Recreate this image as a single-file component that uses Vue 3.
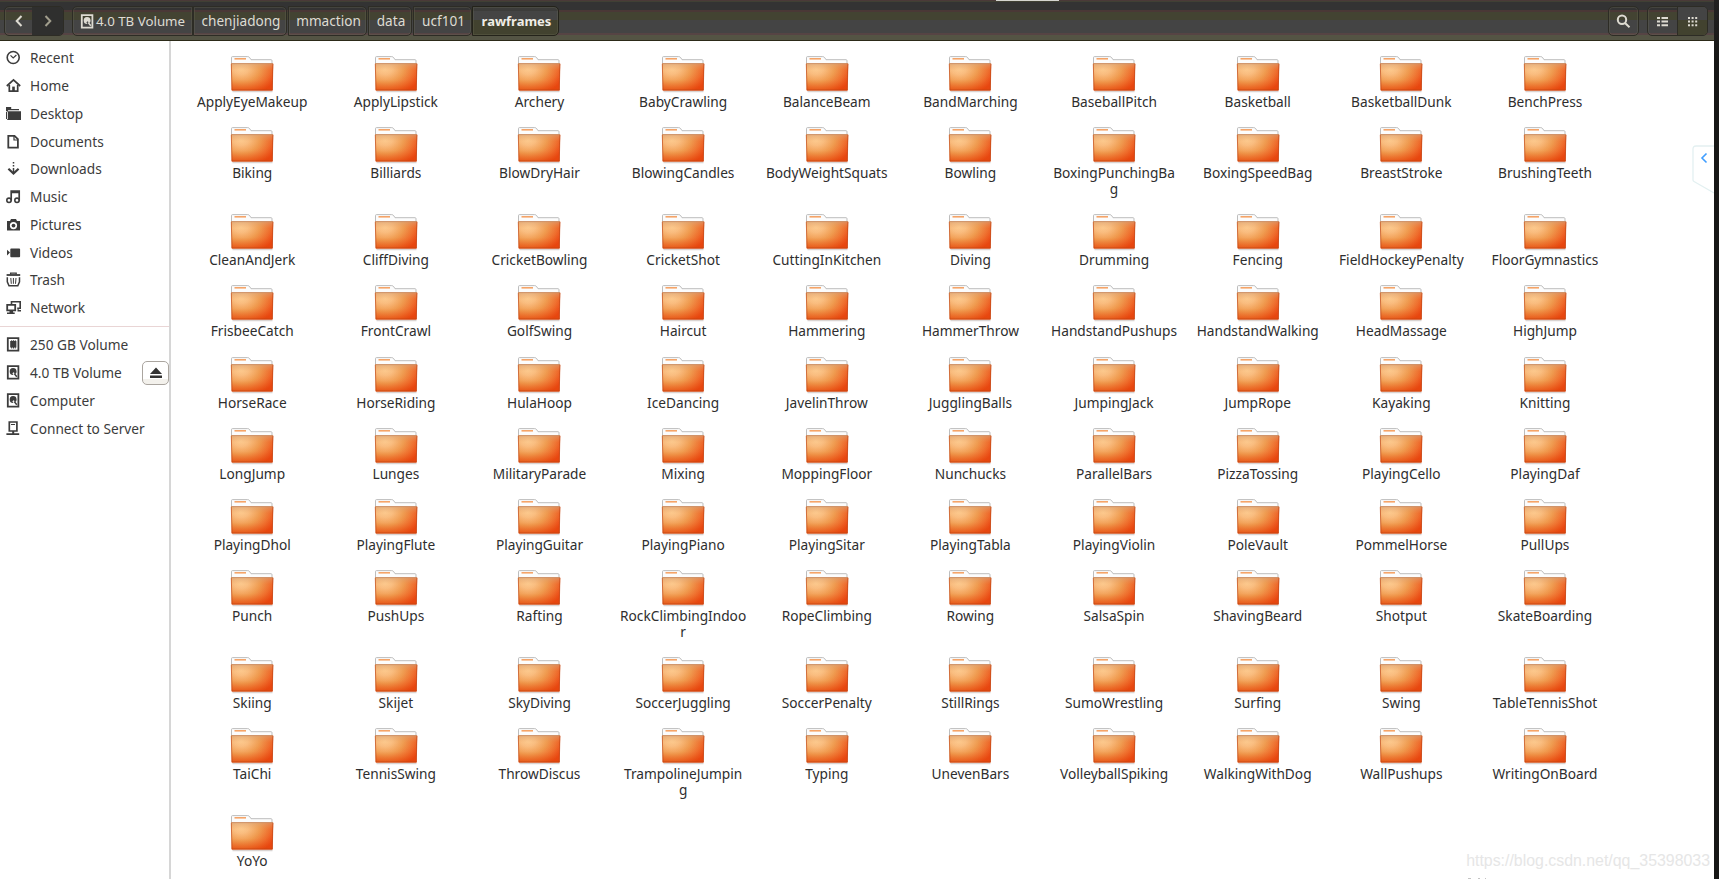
<template>
  <div class="window">
    <!-- Shared folder artwork, referenced by every grid item -->
    <svg class="defs" width="0" height="0">
      <defs>
        <radialGradient id="folderGlow" gradientUnits="userSpaceOnUse" cx="0" cy="0" r="1" gradientTransform="translate(11 13) scale(37 27)">
          <stop offset="0" stop-color="#ffcf94" />
          <stop offset="0.2" stop-color="#fbc184" />
          <stop offset="0.5" stop-color="#f09c50" />
          <stop offset="0.78" stop-color="#ef6c2c" />
          <stop offset="1" stop-color="#ea400f" />
        </radialGradient>
        <linearGradient id="folderShade" x1="0" y1="0" x2="0" y2="1">
          <stop offset="0" stop-color="#d8a880" stop-opacity="0.6" />
          <stop offset="0.25" stop-color="#e8a060" stop-opacity="0.1" />
          <stop offset="0.6" stop-color="#e86a20" stop-opacity="0.05" />
          <stop offset="1" stop-color="#e04808" stop-opacity="0.5" />
        </linearGradient>
        <symbol id="folder" viewBox="0 0 44 37">
          <path d="M2.5 35.5h40" stroke="#d9d4d2" stroke-width="1.4" />
          <path d="M1.5 9V1.6Q1.5.6 2.5.6H17.5Q19 .6 19.8 1.8L21 3.7H41Q42 3.7 42 4.7V9Z" fill="#fcfcfc" stroke="#b5b5b5" stroke-width="0.9" />
          <path d="M4.5 2.8h11.5" stroke="#f5a468" stroke-width="1.6" />
          <path d="M1 7.5h42.2L42.6 34.4H1.7Z" fill="url(#folderGlow)" />
          <path d="M1 7.5h42.2L42.6 34.4H1.7Z" fill="url(#folderShade)" />
          <path d="M1.3 7.9 2 34h40.3l.6-26" fill="none" stroke="#bd4414" stroke-width="0.9" stroke-opacity="0.75" />
          <path d="M1 7.6h42" stroke="#c98a60" stroke-width="0.9" />
        </symbol>
      </defs>
    </svg>

    <header class="toolbar">
      <div class="group nav">
        <button class="btn back"><svg width="8" height="12" viewBox="0 0 8 12"><path d="M6.5 1 1.7 6l4.8 5" /></svg></button>
        <button class="btn forward"><svg width="8" height="12" viewBox="0 0 8 12"><path d="m1.5 1 4.8 5-4.8 5" /></svg></button>
      </div>
      <div class="path">
        <button v-for="(p, i) in crumbs" :key="p" class="crumb" :class="['crumb-' + i, { active: i === crumbs.length - 1 }]">
          <svg v-if="i === 0" class="disk" width="14" height="15" viewBox="0 0 14 15" v-html="glyphs.disk"></svg>
          <span>{{ p }}</span>
        </button>
      </div>
      <div class="spacer"></div>
      <button class="group search">
        <svg width="15" height="15" viewBox="0 0 15 15"><circle cx="6" cy="5.8" r="4.2" /><path d="m9 9 4.5 4.2" /></svg>
      </button>
      <div class="group views">
        <button class="btn">
          <svg class="solid" width="11" height="11" viewBox="0 0 11 11">
            <path d="M0 1h3v2H0zM4.5 1H11v2H4.5zM0 4.6h3v2H0zM4.5 4.6H11v2H4.5zM0 8.2h3v2H0zM4.5 8.2H11v2H4.5z" />
          </svg>
        </button>
        <button class="btn grid-view">
          <svg class="solid" width="11" height="11" viewBox="0 0 11 11">
            <path d="M1 1h2v2H1zM4.6 1h2v2h-2zM8.2 1h2v2h-2zM1 4.6h2v2H1zM4.6 4.6h2v2h-2zM8.2 4.6h2v2h-2zM1 8.2h2v2H1zM4.6 8.2h2v2h-2zM8.2 8.2h2v2h-2z" />
          </svg>
        </button>
      </div>
    </header>

    <div class="body">
      <aside class="sidebar">
        <ul class="places">
          <li v-for="p in places" :key="p.name">
            <svg width="15" height="15" viewBox="0 0 15 15" v-html="glyphs[p.icon]"></svg>
            <span>{{ p.name }}</span>
          </li>
        </ul>
        <ul class="places devices">
          <li v-for="d in devices" :key="d.name">
            <svg width="15" height="15" viewBox="0 0 15 15" v-html="glyphs[d.icon]"></svg>
            <span>{{ d.name }}</span>
            <button v-if="d.eject" class="eject">
              <svg width="12" height="12" viewBox="0 0 12 12"><path d="M6 .5 12 7H0zM0 8.5h12V11H0z" /></svg>
            </button>
          </li>
        </ul>
      </aside>

      <main class="files">
        <div v-for="f in folders" :key="f" class="item">
          <svg class="folder" width="44" height="37"><use href="#folder" /></svg>
          <span class="label">{{ f }}</span>
        </div>
      </main>
    </div>

    <div class="top-mark"></div>
    <svg class="side-tab" width="22" height="50" viewBox="0 0 22 50">
      <path d="M22 1H4Q1 1 1 4v31q0 1 1 1.5L22 48" fill="none" stroke="#e3f0f1" stroke-width="1.3" />
      <path d="M14.5 8.5 10 13l4.5 4.5" fill="none" stroke="#409eff" stroke-width="1.6" />
    </svg>
    <div class="watermark">https://blog.csdn.net/qq_35398033</div>
    <svg class="cut-marks" width="24" height="2" viewBox="0 0 24 2"><path d="M1 1.5h3M11 1.5h2M18 1.5h1" stroke="#c4c4c4" /></svg>
    <div class="edge"></div>
  </div>
</template>

<script setup>
const crumbs = ['4.0 TB Volume', 'chenjiadong', 'mmaction', 'data', 'ucf101', 'rawframes'];

const places = [
  { name: 'Recent', icon: 'recent' },
  { name: 'Home', icon: 'home' },
  { name: 'Desktop', icon: 'desktop' },
  { name: 'Documents', icon: 'documents' },
  { name: 'Downloads', icon: 'downloads' },
  { name: 'Music', icon: 'music' },
  { name: 'Pictures', icon: 'pictures' },
  { name: 'Videos', icon: 'videos' },
  { name: 'Trash', icon: 'trash' },
  { name: 'Network', icon: 'network' },
];

const devices = [
  { name: '250 GB Volume', icon: 'ssd' },
  { name: '4.0 TB Volume', icon: 'disk', eject: true },
  { name: 'Computer', icon: 'disk' },
  { name: 'Connect to Server', icon: 'server' },
];

// Symbolic icons on a 15x15 canvas, drawn in the current text colour
const line = (d, w = 1.6) => `<path d="${d}" fill="none" stroke="currentColor" stroke-width="${w}"/>`;
const fill = (d) => `<path d="${d}" fill="currentColor" fill-rule="evenodd"/>`;

const glyphs = {
  recent: '<circle cx="7.2" cy="7.5" r="6" fill="none" stroke="currentColor" stroke-width="1.6"/>' + line('M4.5 5.3 7.2 8l3.2-3', 1.2),
  home: line('M.8 8 7.5 1.9 14.2 8', 1.7) + line('M3.3 7v6.2h8.4V7', 1.7) + fill('M6.2 8.6h2.6V13H6.2z'),
  desktop: fill('M0 1h5.2v2H13v1.2H2v1.5H0zM0 5h1.2v9H0zM2 5.2h13V14H0V13h2z'),
  documents: line('M2.3 1.8h6.2l3.4 3.4v8.4H2.3z', 1.8) + line('M8 2v4h4', 1.2),
  downloads: line('M7.5 1v1.4M7.5 4v1.4M7.5 7v5.3', 1.5) + line('m2.4 7.8 5.1 4.8 5.1-4.8', 2.2),
  music: line('M5.2 11.5V2h8v9.5M5.2 3.3h8', 1.7) +
    '<circle cx="3" cy="11.3" r="2.2" fill="none" stroke="currentColor" stroke-width="1.6"/><circle cx="11" cy="11.3" r="2.2" fill="none" stroke="currentColor" stroke-width="1.6"/>',
  pictures: fill('M1 4h3l1-2h5l1 2h3v9.5H1zM7.5 5a3.6 3.6 0 1 0 0 7.2 3.6 3.6 0 0 0 0-7.2z') +
    '<circle cx="7.5" cy="8.6" r="1.9" fill="currentColor"/>',
  videos: fill('M1 4.8 4 7.6l-3 2.8zM4.3 4.2Q4.3 3.4 5.2 3.4h8q.9 0 .9.9v7q0 .9-.9.9h-8q-.9 0-.9-.9z'),
  trash: line('M4.6 2.4V1.2h5.6v1.2', 1.3) + line('M.6 3h13.6', 1.8) + line('M1.3 5.2v4.6l1.7 4h8.8l1.7-4V5.2', 1.5) + line('m4.8 6 .5 5.8M7.4 6v5.8M10 6l-.5 5.8', 1),
  network: line('M5.5 4V1.7h8.7v6.5h-3', 1.6) + line('M1.2 4.8h8v5.6h-8z', 1.8) + fill('M3.5 11h3.6v1.5h1.6V14H1v-1.5h2.5zM11.5 9h1.2v1H15v1.5h-3.5z'),
  ssd: line('M1.8 1.2h10.6v12.4H1.8z', 1.8) + fill('M4.2 4h1v-.8h1V4h.8v-.8h1V4h.8v-.8h.9V4h.7v6.5h-.7v.9h-.9v-.9H8v.9H7v-.9h-.8v.9h-1v-.9h-1z'),
  disk: line('M1.8 1.2h10.6v12.4H1.8z', 1.8) + fill('M7 3a3.6 3.6 0 0 1 3.6 3.4q0 1.6-1 2.6L7.6 7.2 6.4 8.3l1 1.7A3.5 3.5 0 1 1 7 3z') + line('m8.2 8.5 2.6 3.2', 1.5),
  server: line('M3.3 1h7.6v9H3.3z', 1.7) + fill('M5 3h4v1H5zM6.2 10h2v2.3h5v1.8H.4v-1.8h5.8z'),
};

// A newline marks where a long name breaks onto its second line
const folders = [
  'ApplyEyeMakeup', 'ApplyLipstick', 'Archery', 'BabyCrawling', 'BalanceBeam', 'BandMarching', 'BaseballPitch', 'Basketball', 'BasketballDunk', 'BenchPress',
  'Biking', 'Billiards', 'BlowDryHair', 'BlowingCandles', 'BodyWeightSquats', 'Bowling', 'BoxingPunchingBa\ng', 'BoxingSpeedBag', 'BreastStroke', 'BrushingTeeth',
  'CleanAndJerk', 'CliffDiving', 'CricketBowling', 'CricketShot', 'CuttingInKitchen', 'Diving', 'Drumming', 'Fencing', 'FieldHockeyPenalty', 'FloorGymnastics',
  'FrisbeeCatch', 'FrontCrawl', 'GolfSwing', 'Haircut', 'Hammering', 'HammerThrow', 'HandstandPushups', 'HandstandWalking', 'HeadMassage', 'HighJump',
  'HorseRace', 'HorseRiding', 'HulaHoop', 'IceDancing', 'JavelinThrow', 'JugglingBalls', 'JumpingJack', 'JumpRope', 'Kayaking', 'Knitting',
  'LongJump', 'Lunges', 'MilitaryParade', 'Mixing', 'MoppingFloor', 'Nunchucks', 'ParallelBars', 'PizzaTossing', 'PlayingCello', 'PlayingDaf',
  'PlayingDhol', 'PlayingFlute', 'PlayingGuitar', 'PlayingPiano', 'PlayingSitar', 'PlayingTabla', 'PlayingViolin', 'PoleVault', 'PommelHorse', 'PullUps',
  'Punch', 'PushUps', 'Rafting', 'RockClimbingIndoo\nr', 'RopeClimbing', 'Rowing', 'SalsaSpin', 'ShavingBeard', 'Shotput', 'SkateBoarding',
  'Skiing', 'Skijet', 'SkyDiving', 'SoccerJuggling', 'SoccerPenalty', 'StillRings', 'SumoWrestling', 'Surfing', 'Swing', 'TableTennisShot',
  'TaiChi', 'TennisSwing', 'ThrowDiscus', 'TrampolineJumpin\ng', 'Typing', 'UnevenBars', 'VolleyballSpiking', 'WalkingWithDog', 'WallPushups', 'WritingOnBoard',
  'YoYo',
];
</script>

<style>
body {
  margin: 0;
  overflow: hidden;
}
</style>

<style scoped>
.window {
  position: relative;
  display: flex;
  flex-direction: column;
  width: 1719px;
  height: 879px;
  overflow: hidden;
  background: #fff;
  color: #333;
  font-family: "Noto Sans", "Open Sans", sans-serif;
  font-size: 13.7px;
}
.defs {
  position: absolute;
}
button {
  margin: 0;
  padding: 0;
  border: 0;
  background: none;
  color: inherit;
  font: inherit;
}

/* --- Toolbar --- */
.toolbar {
  display: flex;
  flex: none;
  box-sizing: border-box;
  height: 41px;
  padding: 6px 11px 5px 4px;
  color: #dedbd2;
  background: linear-gradient(
    #4a3a38 0 1px, #404034 1px 2px, #333 2px 10px, #4a3836 10px 12px,
    #434332 12px 19.5px, #444 19.5px 33px, #564444 33px 35px,
    #545444 35px 40px, #2c2a18 40px
  );
}
.toolbar svg {
  fill: none;
  stroke: currentColor;
  stroke-width: 2;
}
.toolbar svg.solid {
  fill: currentColor;
  stroke: none;
}
.toolbar svg.disk {
  stroke: none;
}
.group,
.crumb {
  box-sizing: border-box;
  display: flex;
  align-items: center;
  justify-content: center;
  height: 30px;
  border: 1px solid #2d2c25;
  border-radius: 5px;
  box-shadow: inset 0 0 0 1px rgba(110, 108, 88, 0.3);
}
.btn {
  flex: 1;
  display: flex;
  align-items: center;
  justify-content: center;
  height: 100%;
}
.nav {
  width: 60px;
  margin-right: 8px;
}
.back {
  flex: 0 0 27px;
}
.forward {
  background: #2f2f2e;
  color: #a19e8d;
  border-radius: 0 4px 4px 0;
}
.path {
  display: flex;
}
.crumb {
  padding-left: 2px;
  border-radius: 0 5px 5px 0;
  font-size: 13.6px;
}
.crumb span {
  position: relative;
  top: -0.5px;
}
.crumb-0 {
  width: 121px;
  padding-left: 0;
  border-radius: 5px 0 0 5px;
  gap: 2px;
  font-size: 13.3px;
}
.crumb-1 {
  width: 94px;
  margin-right: 1px;
}
.crumb-2 {
  width: 79px;
  margin-right: 1px;
}
.crumb-3 {
  width: 44px;
  margin-right: 1px;
}
.crumb-4 {
  width: 59px;
}
.crumb-5 {
  width: 87px;
}
.active {
  font-size: 13px;
  font-weight: 700;
  color: #efede6;
  border-color: #24231a;
  background: linear-gradient(#3c3c3a 0 4px, #444 4px 13px, #42422f 13px);
}
.spacer {
  flex: 1;
}
.search {
  width: 31px;
  margin-right: 8px;
}
.views {
  width: 61px;
}
.grid-view {
  border-left: 1px solid #2d2c25;
  border-radius: 0 4px 4px 0;
  background: linear-gradient(#444 0 13px, #42422f 13px);
}

/* --- Sidebar --- */
.body {
  display: flex;
  flex: 1;
  min-height: 0;
}
.sidebar {
  flex: none;
  width: 169px;
  border-right: 2px solid #d6d6d6;
}
.places {
  margin: 0;
  padding: 3px 0 4.5px;
  list-style: none;
}
.places li {
  display: flex;
  align-items: center;
  height: 27.75px;
  padding-left: 6px;
  color: #3c3c3c;
}
.places li span {
  margin-left: 9px;
  flex: 1;
  white-space: nowrap;
}
.devices {
  padding-top: 4px;
  border-top: 1px solid #e9d5d5;
}
.eject {
  display: flex;
  align-items: center;
  justify-content: center;
  box-sizing: border-box;
  width: 27px;
  height: 24px;
  border: 1px solid #aaa59f;
  border-radius: 5px;
  background: linear-gradient(#fff 0 17px, #f3f1ec 17px);
}
.eject svg {
  fill: #333;
}

/* --- Folder grid --- */
.files {
  flex: 1;
  display: grid;
  grid-template-columns: repeat(10, 143.65px);
  align-content: start;
  padding: 15px 0 0 9.4px;
}
.item {
  display: flex;
  flex-direction: column;
  align-items: center;
  padding-bottom: 17.15px;
}
.folder {
  display: block;
  margin-bottom: 1px;
}
.label {
  color: #2e2e2e;
  line-height: 16px;
  text-align: center;
  white-space: pre;
}

/* --- Things lying over the window --- */
.top-mark {
  position: absolute;
  top: 0;
  left: 996px;
  width: 63px;
  height: 1px;
  background: #d5d5d0;
}
.side-tab {
  position: absolute;
  top: 145px;
  left: 1692px;
}
.watermark {
  position: absolute;
  right: 9px;
  bottom: 8px;
  color: #e6e6e6;
  font: 15.9px/20px "Liberation Sans", sans-serif;
}
.cut-marks {
  position: absolute;
  left: 1467px;
  bottom: 0;
}
.edge {
  position: absolute;
  top: 0;
  right: 0;
  width: 5px;
  height: 100%;
  background: linear-gradient(#222, #171716 60px);
}
</style>
